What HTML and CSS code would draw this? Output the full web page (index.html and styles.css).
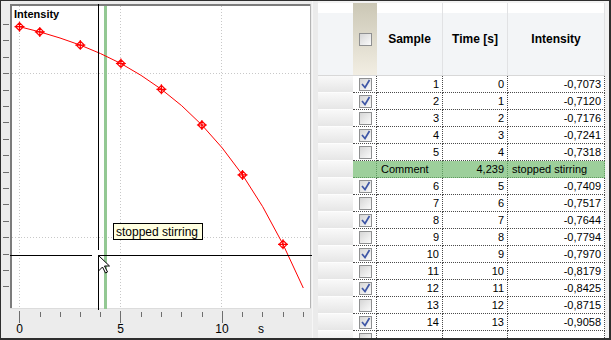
FILE: index.html
```html
<!DOCTYPE html>
<html lang="en">
<head>
  <meta charset="utf-8">
  <title>Intensity</title>
  <link rel="stylesheet" href="styles.css">
</head>
<body>
  <div class="window">
    <div class="chart">
      <svg width="311" height="337" viewBox="1 1 311 337">
        <rect x="1" y="1" width="311" height="337" fill="#ececec"/>
        <!-- plot area -->
        <rect x="10" y="4" width="301" height="305" fill="#fff"/>
        <path d="M11 4V309" stroke="#7c7c7c" stroke-width="2"/>
        <path d="M10 5H311" stroke="#7c7c7c" stroke-width="2"/>
        <path d="M310.5 4V309" stroke="#b4b4b4"/>
        <path d="M10 308.5H311" stroke="#dcdcdc"/>
        <!-- grid -->
        <g stroke="#c8c8c8" stroke-dasharray="1 2">
          <path d="M19.5 6V308M120.5 6V308M221.5 6V308"/>
          <path d="M12 73.5H310M12 237.5H310"/>
        </g>
        <!-- y ticks -->
        <path stroke="#6e6e6e" d="M3 24.5H9M3 40.5H9M3 57.5H9M3 73.5H9M3 90.5H9M3 106.5H9M3 122.5H9M3 139.5H9M3 155.5H9M3 172.5H9M3 188.5H9M3 204.5H9M3 221.5H9M3 237.5H9M3 254.5H9M3 270.5H9M3 286.5H9"/>
        <!-- x ticks -->
        <path stroke="#6e6e6e" d="M19.5 311V323M40.5 312V317M60.5 312V317M80.5 312V317M100.5 312V317M120.5 311V323M141.5 312V317M161.5 312V317M181.5 312V317M202.5 312V317M222.5 311V323M242.5 312V317M262.5 312V317M283.5 312V317M303.5 312V317"/>
        <g class="axis-label" text-anchor="middle">
          <text x="19.5" y="333">0</text>
          <text x="120.5" y="333">5</text>
          <text x="222" y="333">10</text>
          <text x="261" y="333">s</text>
        </g>
        <text class="title" x="14" y="18">Intensity</text>
        <!-- comment marker -->
        <rect x="104" y="6" width="3" height="303" fill="#93c893"/>
        <!-- curve -->
        <polyline fill="none" stroke="#ff0000" points="19.5,26.7 39.8,31.9 60,38 80.3,45.1 100.6,53.6 120.9,63.5 141.1,75.4 161.4,89.3 181.7,105.7 201.9,125 222.2,147.9 242.5,174.9 262.7,206.7 283,244.3 303.3,288"/>
        <g fill="none" stroke="#ff0000" stroke-width="1.2">
          <path d="M15.5 26.7L19.5 22.7L23.5 26.7L19.5 30.7ZM14.5 26.7H24.5M19.5 21.7V31.7"/>
          <path d="M35.8 31.9L39.8 27.9L43.8 31.9L39.8 35.9ZM34.8 31.9H44.8M39.8 26.9V36.9"/>
          <path d="M76.3 45.1L80.3 41.1L84.3 45.1L80.3 49.1ZM75.3 45.1H85.3M80.3 40.1V50.1"/>
          <path d="M116.9 63.5L120.9 59.5L124.9 63.5L120.9 67.5ZM115.9 63.5H125.9M120.9 58.5V68.5"/>
          <path d="M157.4 89.3L161.4 85.3L165.4 89.3L161.4 93.3ZM156.4 89.3H166.4M161.4 84.3V94.3"/>
          <path d="M197.9 125L201.9 121L205.9 125L201.9 129ZM196.9 125H206.9M201.9 120V130"/>
          <path d="M238.5 174.9L242.5 170.9L246.5 174.9L242.5 178.9ZM237.5 174.9H247.5M242.5 169.9V179.9"/>
          <path d="M279 244.3L283 240.3L287 244.3L283 248.3ZM278 244.3H288M283 239.3V249.3"/>
        </g>
        <!-- crosshair -->
        <path stroke="#000" d="M98.5 4V250M98.5 256V310M10 255.5H92M98 255.5H313"/>
        <!-- tooltip -->
        <rect x="113.5" y="223.5" width="89" height="16" fill="#ffffe1" stroke="#000"/>
        <text class="tip" x="116" y="235.5">stopped stirring</text>
        <!-- mouse pointer -->
        <path d="M98.5 255.5V271L102.5 267L105.5 273L107.5 272L104.5 266H109.5Z" fill="#fff" stroke="#000"/>
      </svg>
    </div>
    <div class="splitter"></div>
    <div class="grid">
      <table>
        <colgroup>
          <col class="c-rh"><col class="c-ck"><col class="c-sample"><col class="c-time"><col class="c-int">
        </colgroup>
        <thead>
          <tr>
            <th class="rh"></th>
            <th class="ck"><span class="box"></span></th>
            <th>Sample</th>
            <th>Time [s]</th>
            <th>Intensity</th>
          </tr>
        </thead>
        <tbody>
          <tr><td class="rh"></td><td class="ck"><span class="box"><svg class="tick" viewBox="0 0 11 11"><path d="M2 5L5 8.5L9.5 1"/></svg></span></td><td>1</td><td>0</td><td>-0,7073</td></tr>
          <tr><td class="rh"></td><td class="ck"><span class="box"><svg class="tick" viewBox="0 0 11 11"><path d="M2 5L5 8.5L9.5 1"/></svg></span></td><td>2</td><td>1</td><td>-0,7120</td></tr>
          <tr><td class="rh"></td><td class="ck"><span class="box"></span></td><td>3</td><td>2</td><td>-0,7176</td></tr>
          <tr><td class="rh"></td><td class="ck"><span class="box"><svg class="tick" viewBox="0 0 11 11"><path d="M2 5L5 8.5L9.5 1"/></svg></span></td><td>4</td><td>3</td><td>-0,7241</td></tr>
          <tr><td class="rh"></td><td class="ck"><span class="box"></span></td><td>5</td><td>4</td><td>-0,7318</td></tr>
          <tr class="comment"><td class="rh"></td><td class="ck"></td><td class="left">Comment</td><td>4,239</td><td class="left">stopped stirring</td></tr>
          <tr><td class="rh"></td><td class="ck"><span class="box"><svg class="tick" viewBox="0 0 11 11"><path d="M2 5L5 8.5L9.5 1"/></svg></span></td><td>6</td><td>5</td><td>-0,7409</td></tr>
          <tr><td class="rh"></td><td class="ck"><span class="box"></span></td><td>7</td><td>6</td><td>-0,7517</td></tr>
          <tr><td class="rh"></td><td class="ck"><span class="box"><svg class="tick" viewBox="0 0 11 11"><path d="M2 5L5 8.5L9.5 1"/></svg></span></td><td>8</td><td>7</td><td>-0,7644</td></tr>
          <tr><td class="rh"></td><td class="ck"><span class="box"></span></td><td>9</td><td>8</td><td>-0,7794</td></tr>
          <tr><td class="rh"></td><td class="ck"><span class="box"><svg class="tick" viewBox="0 0 11 11"><path d="M2 5L5 8.5L9.5 1"/></svg></span></td><td>10</td><td>9</td><td>-0,7970</td></tr>
          <tr><td class="rh"></td><td class="ck"><span class="box"></span></td><td>11</td><td>10</td><td>-0,8179</td></tr>
          <tr><td class="rh"></td><td class="ck"><span class="box"><svg class="tick" viewBox="0 0 11 11"><path d="M2 5L5 8.5L9.5 1"/></svg></span></td><td>12</td><td>11</td><td>-0,8425</td></tr>
          <tr><td class="rh"></td><td class="ck"><span class="box"></span></td><td>13</td><td>12</td><td>-0,8715</td></tr>
          <tr><td class="rh"></td><td class="ck"><span class="box"><svg class="tick" viewBox="0 0 11 11"><path d="M2 5L5 8.5L9.5 1"/></svg></span></td><td>14</td><td>13</td><td>-0,9058</td></tr>
          <tr><td class="rh"></td><td class="ck"><span class="box"></span></td><td></td><td></td><td></td></tr>
        </tbody>
      </table>
    </div>
  </div>
</body>
</html>
```

FILE: styles.css
```css
body {
	margin: 0;
	background: #fff;
}

/* outer frame of the tool window */
.window {
	box-sizing: border-box;
	width: 611px;
	height: 340px;
	display: flex;
	border: 1px solid #2e2e2e;
	border-right-width: 2px;
	border-bottom-width: 2px;
	background: #ececec;
	overflow: hidden;
}

.chart {
	flex: none;
	width: 311px;
}
.chart svg {
	display: block;
}
.axis-label {
	font: 12px "Liberation Sans", Arial, sans-serif;
	fill: #000;
}
.title {
	font: bold 11px "Liberation Sans", Arial, sans-serif;
	fill: #000;
}
.tip {
	font: 12px "Liberation Sans", Arial, sans-serif;
	fill: #000;
}

.splitter {
	flex: none;
	width: 6px;
	background: #ebebeb;
	border-left: 1px solid #f6f6f6;
	box-sizing: border-box;
}

/* data grid */
.grid {
	flex: 1;
	padding: 2px 3px 0 0;
	overflow: hidden;
	background: #f2f2f2;
}
table {
	border-collapse: separate;
	border-spacing: 0;
	table-layout: fixed;
	width: 287px;
	font: 11px "Liberation Sans", Arial, sans-serif;
	color: #000;
}
.c-rh { width: 35px; }
.c-ck { width: 24px; }
.c-sample { width: 66px; }
.c-time { width: 65px; }
.c-int { width: 97px; }

th {
	box-sizing: border-box;
	height: 73px;
	padding: 0;
	font: bold 12px "Liberation Sans", Arial, sans-serif;
	text-align: center;
	background: linear-gradient(#fff 0, #fff 10px, #f3f5f7 10px);
	border-right: 1px solid #e1e2e4;
	border-bottom: 1px solid #d8d8d8;
}
th.rh {
	border-right: 0;
}
th.ck {
	background: linear-gradient(#cbc7b5, #f2eee3);
	border-right: 0;
	padding-left: 6px;
	text-align: left;
}

td {
	box-sizing: border-box;
	height: 17px;
	padding: 0 3px 0 0;
	text-align: right;
	white-space: nowrap;
	background: #fff;
	border-right: 1px dotted #4a4a4a;
	border-bottom: 1px dotted #4a4a4a;
}
td.rh {
	padding: 0;
	background: linear-gradient(#f9f9f9, #e6e6e6);
	border-right: 0;
	border-bottom: 1px solid #fdfdfd;
}
td.ck {
	padding: 0 0 0 6px;
	text-align: left;
	line-height: 0;
}
td.left {
	text-align: left;
	padding: 0 0 0 4px;
}

.comment td {
	background: #9dcf9b;
	border-color: #5f9a5f;
}
.comment td.rh {
	background: linear-gradient(#f9f9f9, #e6e6e6);
	border-bottom-color: #fdfdfd;
}

/* checkboxes */
.box {
	display: inline-block;
	box-sizing: border-box;
	width: 13px;
	height: 13px;
	border: 1px solid #8f9091;
	background: linear-gradient(135deg, #d6d6d6, #fbfbfb);
	vertical-align: middle;
}
.tick {
	display: block;
	width: 11px;
	height: 11px;
}
.tick path {
	fill: none;
	stroke: #3f57a6;
	stroke-width: 1.7;
}
```
